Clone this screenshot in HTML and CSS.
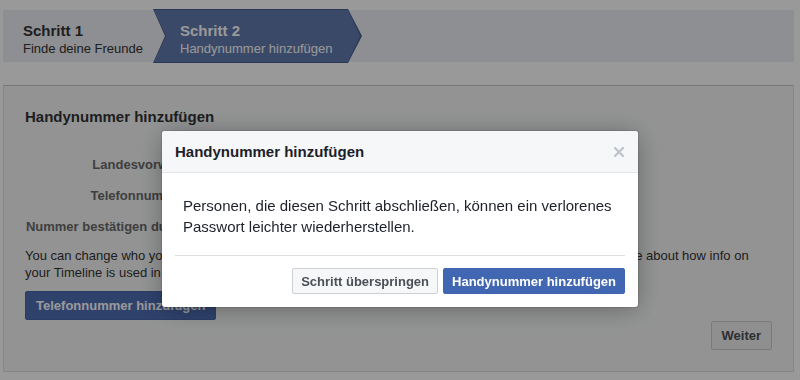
FILE: index.html
```html
<!DOCTYPE html>
<html lang="de">
<head>
    <meta charset="UTF-8">
    <meta name="viewport" content="width=device-width, initial-scale=1.0">
    <title>Handynummer hinzufügen</title>
    <link rel="stylesheet" href="styles.css">
</head>
<body>

<div class="page">
    <!-- Step bar -->
    <div class="steps">
        <div class="step step-done">
            <div class="step-title">Schritt 1</div>
            <div class="step-sub">Finde deine Freunde</div>
        </div>
        <div class="step-current">
            <div class="step-inner">
                <div class="step-title">Schritt 2</div>
                <div class="step-sub">Handynummer hinzufügen</div>
            </div>
        </div>
    </div>

    <!-- Phone form -->
    <div class="panel">
        <h2>Handynummer hinzufügen</h2>
        <div class="form">
            <div class="form-row">
                <label for="country">Landesvorwahl</label>
                <select id="country"><option>Deutschland (+49)</option></select>
            </div>
            <div class="form-row">
                <label for="phone">Telefonnummer</label>
                <input type="text" id="phone">
            </div>
            <div class="form-row">
                <label>Nummer bestätigen durch</label>
                <span class="option">SMS</span>
            </div>
        </div>
        <p class="note">You can change who you share your mobile number with in your personal Settings, at any time. Learn more about how info on<br>your Timeline is used in ads.</p>
        <button class="btn btn-blue">Telefonnummer hinzufügen</button>
        <div class="panel-footer">
            <button class="btn btn-gray">Weiter</button>
        </div>
    </div>
</div>

<!-- Dialog -->
<div class="overlay">
    <div class="dialog">
        <div class="dialog-header">
            <span class="dialog-title">Handynummer hinzufügen</span>
            <svg class="close" width="10" height="10" viewBox="0 0 10 10">
                <path d="M1 1L9 9M9 1L1 9" stroke="#bec2c9" stroke-width="2.2" stroke-linecap="square"/>
            </svg>
        </div>
        <div class="dialog-body">
            Personen, die diesen Schritt abschließen, können ein verlorenes Passwort leichter wiederherstellen.
        </div>
        <div class="dialog-footer">
            <button class="dbtn dbtn-skip">Schritt überspringen</button>
            <button class="dbtn dbtn-confirm">Handynummer hinzufügen</button>
        </div>
    </div>
</div>

</body>
</html>
```

FILE: styles.css
```css
body {
    margin: 0;
    font-family: "Liberation Sans", Arial, sans-serif;
    background: #fff;
    color: #1d2129;
}

.page {
    padding: 10px 6px 7px 3px;
}

/* Step bar */
.steps {
    display: flex;
    height: 52px;
    background: #eceef4;
}

.step-done {
    width: 150px;
    box-sizing: border-box;
    padding: 12px 0 0 20px;
    color: #333;
}

.step-current {
    width: 209px;
    margin: -1px 0;
    padding: 1px;
    box-sizing: border-box;
    background: #4a5f8e;
    clip-path: polygon(0 0, 195px 0, 100% 50%, 195px 100%, 0 100%, 12px 50%);
}

.step-inner {
    height: 100%;
    box-sizing: border-box;
    padding: 12px 0 0 26px;
    background: #627aad;
    color: #fff;
    clip-path: polygon(0 0, 194px 0, calc(100% - 1px) 50%, 194px 100%, 0 100%, 12px 50%);
}

.step-title {
    font-size: 15px;
    line-height: 18px;
    font-weight: bold;
}

.step-sub {
    font-size: 13px;
    line-height: 17px;
}

/* Panel */
.panel {
    margin-top: 23px;
    background: #f5f6f7;
    border: 1px solid #dddfe2;
    border-top-color: #c8c8c8;
    padding: 22px 21px 21px;
}

.panel h2 {
    margin: 0;
    font-size: 15px;
    line-height: 18px;
    color: #333;
}

.form {
    margin-top: 23px;
    margin-bottom: 1px;
}

.form-row {
    display: flex;
    align-items: center;
    height: 31px;
    gap: 10px;
}

.form-row label {
    width: 162px;
    text-align: right;
    font-size: 13px;
    font-weight: bold;
    color: #696969;
}

.form-row select,
.form-row input {
    width: 240px;
    height: 24px;
    border: 1px solid #ccc;
    font-size: 13px;
}

.option {
    font-size: 13px;
}

.note {
    margin: 5px 0 0;
    font-size: 13px;
    line-height: 17px;
    color: #333;
    white-space: nowrap;
}

.btn {
    height: 29px;
    padding: 0 10px;
    border-radius: 2px;
    font-family: inherit;
    font-size: 13px;
    font-weight: bold;
}

.btn-blue {
    margin-top: 10px;
    background: #4e6eb5;
    border: 1px solid #4a66a6;
    color: #fff;
}

.panel-footer {
    margin-top: 1px;
    display: flex;
    justify-content: flex-end;
}

.btn-gray {
    background: #eee;
    border: 1px solid #ccc;
    color: #4b4f56;
}

/* Dialog */
.overlay {
    position: fixed;
    inset: 0;
    background: rgba(0, 0, 0, 0.4);
    display: flex;
    justify-content: center;
    align-items: flex-start;
    padding-top: 131px;
}

.dialog {
    width: 476px;
    background: #fff;
    border-radius: 3px;
    overflow: hidden;
    box-shadow: 0 2px 26px rgba(0, 0, 0, 0.3), 0 0 0 1px rgba(0, 0, 0, 0.1);
}

.dialog-header {
    height: 41px;
    display: flex;
    align-items: center;
    justify-content: space-between;
    padding: 0 14px 0 13px;
    background: #f6f7f9;
    border-bottom: 1px solid #e5e5e5;
}

.dialog-title {
    font-size: 15px;
    font-weight: bold;
    color: #1d2129;
}

.dialog-body {
    padding: 22px 21px 18px;
    font-size: 15px;
    line-height: 21px;
    color: #1d2129;
}

.dialog-footer {
    margin: 0 13px;
    padding: 12px 0 13px;
    border-top: 1px solid #dddfe2;
    display: flex;
    justify-content: flex-end;
    gap: 5px;
}

.dbtn {
    height: 26px;
    padding: 0 8px;
    border-radius: 2px;
    font-family: inherit;
    font-size: 13px;
    font-weight: bold;
}

.dbtn-skip {
    background: #f6f7f9;
    border: 1px solid #ced0d4;
    color: #4b4f56;
}

.dbtn-confirm {
    background: #4267b2;
    border: 1px solid #4267b2;
    color: #fff;
}
```
